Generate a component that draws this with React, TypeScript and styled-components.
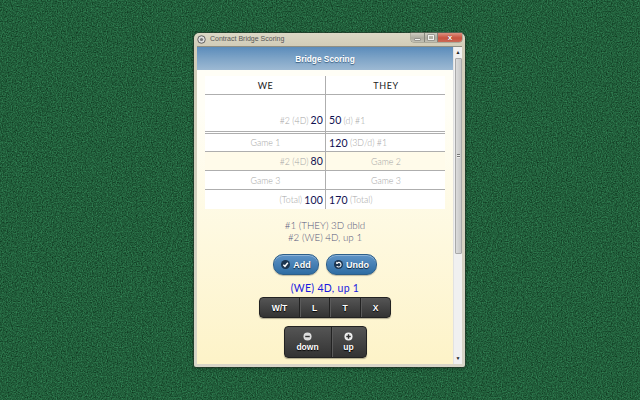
import React from "react";
import styled, { createGlobalStyle } from "styled-components";

const Global = createGlobalStyle`
  html, body { margin: 0; padding: 0; width: 640px; height: 400px; overflow: hidden; background: #1f5c3a; }
  #root { width: 640px; height: 400px; }
`;
const hand = `"Lato", "Noto Sans", sans-serif`;
const ui = `"Liberation Sans", Arial, sans-serif`;

const Desktop = styled.div`position: relative; width: 640px; height: 400px; overflow: hidden; background: #20603c;`;
const Felt = styled.svg`position: absolute; inset: 0; width: 640px; height: 400px;`;
const Window = styled.div`
  position: absolute; left: 194px; top: 33px; width: 271px; height: 334px; box-sizing: border-box;
  display: flex; flex-direction: column; padding: 0 3px 3px;
  background: linear-gradient(#dcd8c6, #d2cdb9 12px, #d8d5c8);
  border-radius: 5px 5px 2px 2px; box-shadow: 0 0 0 1px rgba(40,50,40,.5), 0 1px 4px rgba(0,0,0,.4);
`;
const TitleBar = styled.div`height: 13px; flex: none; display: flex; align-items: center; gap: 3px; position: relative;`;
const TitleText = styled.span`font: 7px/12px ${ui}; color: #555; margin-top: -1px; margin-left: 1px;`;
const AppIcon = styled.svg`width: 9px; height: 9px; margin-left: 0;`;
const Controls = styled.div`position: absolute; top: 0; right: 0; height: 9px; display: flex; border-radius: 0 0 3px 3px; overflow: hidden; box-shadow: 0 0 0 .5px #85857b;`;
const Ctrl = styled.div<{ $w: number; $close?: boolean }>`
  box-sizing: border-box; width: ${p => p.$w}px; display: flex; align-items: center; justify-content: center; color: #fff;
  background: ${p => p.$close ? "linear-gradient(#dc9080,#c8533f 55%,#c96a57)" : "linear-gradient(#cfcdc1,#aeaca0 55%,#c2c0b3)"};
  border-right: ${p => p.$close ? "0" : "1px solid #85857b"};
`;
const MinGlyph = styled.i`display: block; width: 5px; height: 1px; margin-top: 4px; background: #f2f2f0; box-shadow: 0 0 0 .5px #777;`;
const MaxGlyph = styled.i`display: block; width: 4px; height: 3px; border: 1px solid #f2f2f0; box-shadow: 0 0 0 .5px #777;`;
const XGlyph = styled.span`font: bold 8px/9px ${ui}; color: #fff; text-shadow: 0 0 1px #622;`;
const Client = styled.div`flex: 1; min-height: 0; display: flex; background: #f0f0f0; border-top: 1px solid #8f8f84;`;
const Page = styled.div`
  width: 256px; flex: none; display: flex; flex-direction: column; align-items: center;
  background: linear-gradient(#fffef6 20%, #fdf3c8);
`;
const Header = styled.header`
  align-self: stretch; height: 23px; flex: none; display: flex; align-items: center; justify-content: center;
  background: linear-gradient(#5b8cbb, #7ea4c7 50%, #9db9d3);
  color: #fff; font: bold 8.3px ${ui}; text-shadow: 0 1px 1px #3b5f80;
`;
const Scores = styled.div`
  width: 240px; margin-top: 6px; display: grid; grid-template-columns: 120px 120px; background: #fff;
`;
const Cell = styled.div<{ $h: number; $side: "l" | "r"; $center?: boolean; $tint?: boolean; $double?: boolean; $last?: boolean; $end?: boolean }>`
  box-sizing: border-box; height: ${p => p.$h}px; display: flex; gap: 2px; padding: 0 2px 0 3px;
  align-items: ${p => p.$end ? "flex-end" : "center"};
  justify-content: ${p => p.$center ? "center" : p.$side === "l" ? "flex-end" : "flex-start"};
  padding-bottom: ${p => p.$end ? "5px" : "0"};
  border-left: ${p => p.$side === "r" ? "1px solid #aeaeae" : "0"};
  border-bottom: ${p => p.$double ? "3px double #aeaeae" : p.$last ? "0" : "1px solid #aeaeae"};
  background: ${p => p.$tint ? "#fffbea" : "#fff"};
`;
const Head = styled.span`font: 400 9px ${hand}; letter-spacing: .6px; color: #222;`;
const Note = styled.span`font: 300 8.8px ${hand}; color: #a4a4a4;`;
const Pts = styled.span`font: 400 10.5px ${hand}; color: #101050; letter-spacing: .2px;`;
const History = styled.div`margin-top: 10px; text-align: center; font: 300 9.8px/12px ${hand}; color: #55557a;`;
const Actions = styled.div`margin-top: 11px; display: flex; gap: 7px;`;
const Action = styled.button<{ $w: number }>`
  box-sizing: border-box; width: ${p => p.$w}px; height: 21px; border-radius: 10px; border: 1px solid #2d5f8a; padding: 0;
  display: flex; align-items: center; justify-content: center; gap: 3px;
  color: #fff; font: bold 9px ${ui}; text-shadow: 0 1px 1px #123;
  background: linear-gradient(#5e93c6, #2f6da3);
  box-shadow: inset 0 1px 0 rgba(255,255,255,.3), 0 1px 1px rgba(0,0,0,.25);
`;
const Round = styled.svg`width: 9px; height: 9px; flex: none;`;
const Result = styled.div`margin-top: 7px; font: 400 10.5px/12px ${hand}; color: #1a1ae0; letter-spacing: .3px;`;
const Segments = styled.div<{ $top: number }>`
  margin-top: ${p => p.$top}px; display: flex; border-radius: 4px; overflow: hidden; border: 1px solid #222;
  background: linear-gradient(#555, #333); box-shadow: 0 1px 1px rgba(0,0,0,.3);
`;
const Seg = styled.div<{ $w: number; $h: number }>`
  box-sizing: border-box; width: ${p => p.$w}px; height: ${p => p.$h}px;
  display: flex; flex-direction: column; align-items: center; justify-content: center; gap: 1px;
  color: #fff; font: bold 8.5px ${ui}; text-shadow: 0 1px 1px #000;
  & + & { border-left: 1px solid #222; box-shadow: inset 1px 0 0 #5a5a5a; }
`;
const Scrollbar = styled.div`flex: 1; display: flex; flex-direction: column; background: #f0f0f0; border-left: 1px solid #e2e2e2;`;
const Arrow = styled.div`height: 11px; flex: none; display: flex; align-items: center; justify-content: center; font: 5px/1 ${ui}; color: #222;`;
const Thumb = styled.div`
  height: 196px; flex: none; margin-left: 1px; width: 7px; background: linear-gradient(90deg,#dcdcdc,#c8c8c8); border: 1px solid #a9a9a9; border-radius: 1px; box-sizing: border-box;
  display: flex; align-items: center; justify-content: center;
`;
const Grip = styled.i`display: block; width: 3px; height: 4px; background: repeating-linear-gradient(#777 0 1px, #eee 1px 2px);`;
const Track = styled.div`flex: 1;`;

const rows = [
  { l: ["#2 (4D)", "20"], r: ["50", "(d) #1"], h: 39, end: true, double: true },
  { lc: "Game 1", r: ["120", "(3D/d) #1"], h: 18 },
  { l: ["#2 (4D)", "80"], rc: "Game 2", h: 19, tint: true },
  { lc: "Game 3", rc: "Game 3", h: 19 },
  { l: ["(Total)", "100"], r: ["170", "(Total)"], h: 19, last: true },
];

export default function App() {
  return (
    <Desktop>
      <Global />
      <Felt viewBox="0 0 640 400">
        <filter id="felt" x="0" y="0" width="100%" height="100%" colorInterpolationFilters="sRGB">
          <feTurbulence type="fractalNoise" baseFrequency="0.8" numOctaves="2" seed="4" />
          <feColorMatrix type="matrix" values="0.2 0 0 0 0.03  0.42 0 0 0 0.16  0.3 0 0 0 0.08  0 0 0 0 1" />
        </filter>
        <rect width="640" height="400" filter="url(#felt)" />
      </Felt>
      <Window>
        <TitleBar>
          <AppIcon viewBox="0 0 10 10"><circle cx="5" cy="5" r="4.2" fill="#ddd" stroke="#555" strokeWidth="1" /><circle cx="5" cy="5" r="1.8" fill="#777" /></AppIcon>
          <TitleText>Contract Bridge Scoring</TitleText>
          <Controls>
            <Ctrl $w={14}><MinGlyph /></Ctrl>
            <Ctrl $w={13}><MaxGlyph /></Ctrl>
            <Ctrl $w={24} $close><XGlyph>x</XGlyph></Ctrl>
          </Controls>
        </TitleBar>
        <Client>
          <Page>
            <Header>Bridge Scoring</Header>
            <Scores>
              <Cell $h={19} $side="l" $center><Head>WE</Head></Cell>
              <Cell $h={19} $side="r" $center><Head>THEY</Head></Cell>
              {rows.map((r, i) => (
                <React.Fragment key={i}>
                  <Cell $h={r.h} $side="l" $center={!!r.lc} $tint={r.tint} $end={r.end} $double={r.double} $last={r.last}>
                    {r.lc ? <Note>{r.lc}</Note> : <><Note>{r.l![0]}</Note><Pts>{r.l![1]}</Pts></>}
                  </Cell>
                  <Cell $h={r.h} $side="r" $center={!!r.rc} $tint={r.tint} $end={r.end} $double={r.double} $last={r.last}>
                    {r.rc ? <Note>{r.rc}</Note> : <><Pts>{r.r![0]}</Pts><Note>{r.r![1]}</Note></>}
                  </Cell>
                </React.Fragment>
              ))}
            </Scores>
            <History>#1 (THEY) 3D dbld<br />#2 (WE) 4D, up 1</History>
            <Actions>
              <Action $w={46}>
                <Round viewBox="0 0 10 10"><circle cx="5" cy="5" r="5" fill="#1c3550" /><path d="M2.6 5.2 4.4 7 7.6 3" fill="none" stroke="#fff" strokeWidth="1.6" /></Round>
                Add
              </Action>
              <Action $w={51}>
                <Round viewBox="0 0 10 10"><circle cx="5" cy="5" r="5" fill="#1c3550" /><path d="M3.6 3.2A2.6 2.6 0 1 1 3 6.6" fill="none" stroke="#fff" strokeWidth="1.2" /><path d="M2.4 1.8v2.6H5z" fill="#fff" /></Round>
                Undo
              </Action>
            </Actions>
            <Result>(WE) 4D, up 1</Result>
            <Segments $top={3}>
              <Seg $w={39} $h={19}>W/T</Seg>
              <Seg $w={30} $h={19}>L</Seg>
              <Seg $w={31} $h={19}>T</Seg>
              <Seg $w={30} $h={19}>X</Seg>
            </Segments>
            <Segments $top={8}>
              <Seg $w={46} $h={30}>
                <Round viewBox="0 0 10 10"><circle cx="5" cy="5" r="4.5" fill="#ddd" /><rect x="2.5" y="4.2" width="5" height="1.6" fill="#333" /></Round>
                down
              </Seg>
              <Seg $w={35} $h={30}>
                <Round viewBox="0 0 10 10"><circle cx="5" cy="5" r="4.5" fill="#eee" /><path d="M2.5 5h5M5 2.5v5" stroke="#333" strokeWidth="1.6" /></Round>
                up
              </Seg>
            </Segments>
          </Page>
          <Scrollbar>
            <Arrow>▲</Arrow>
            <Thumb><Grip /></Thumb>
            <Track />
            <Arrow>▼</Arrow>
          </Scrollbar>
        </Client>
      </Window>
    </Desktop>
  );
}
